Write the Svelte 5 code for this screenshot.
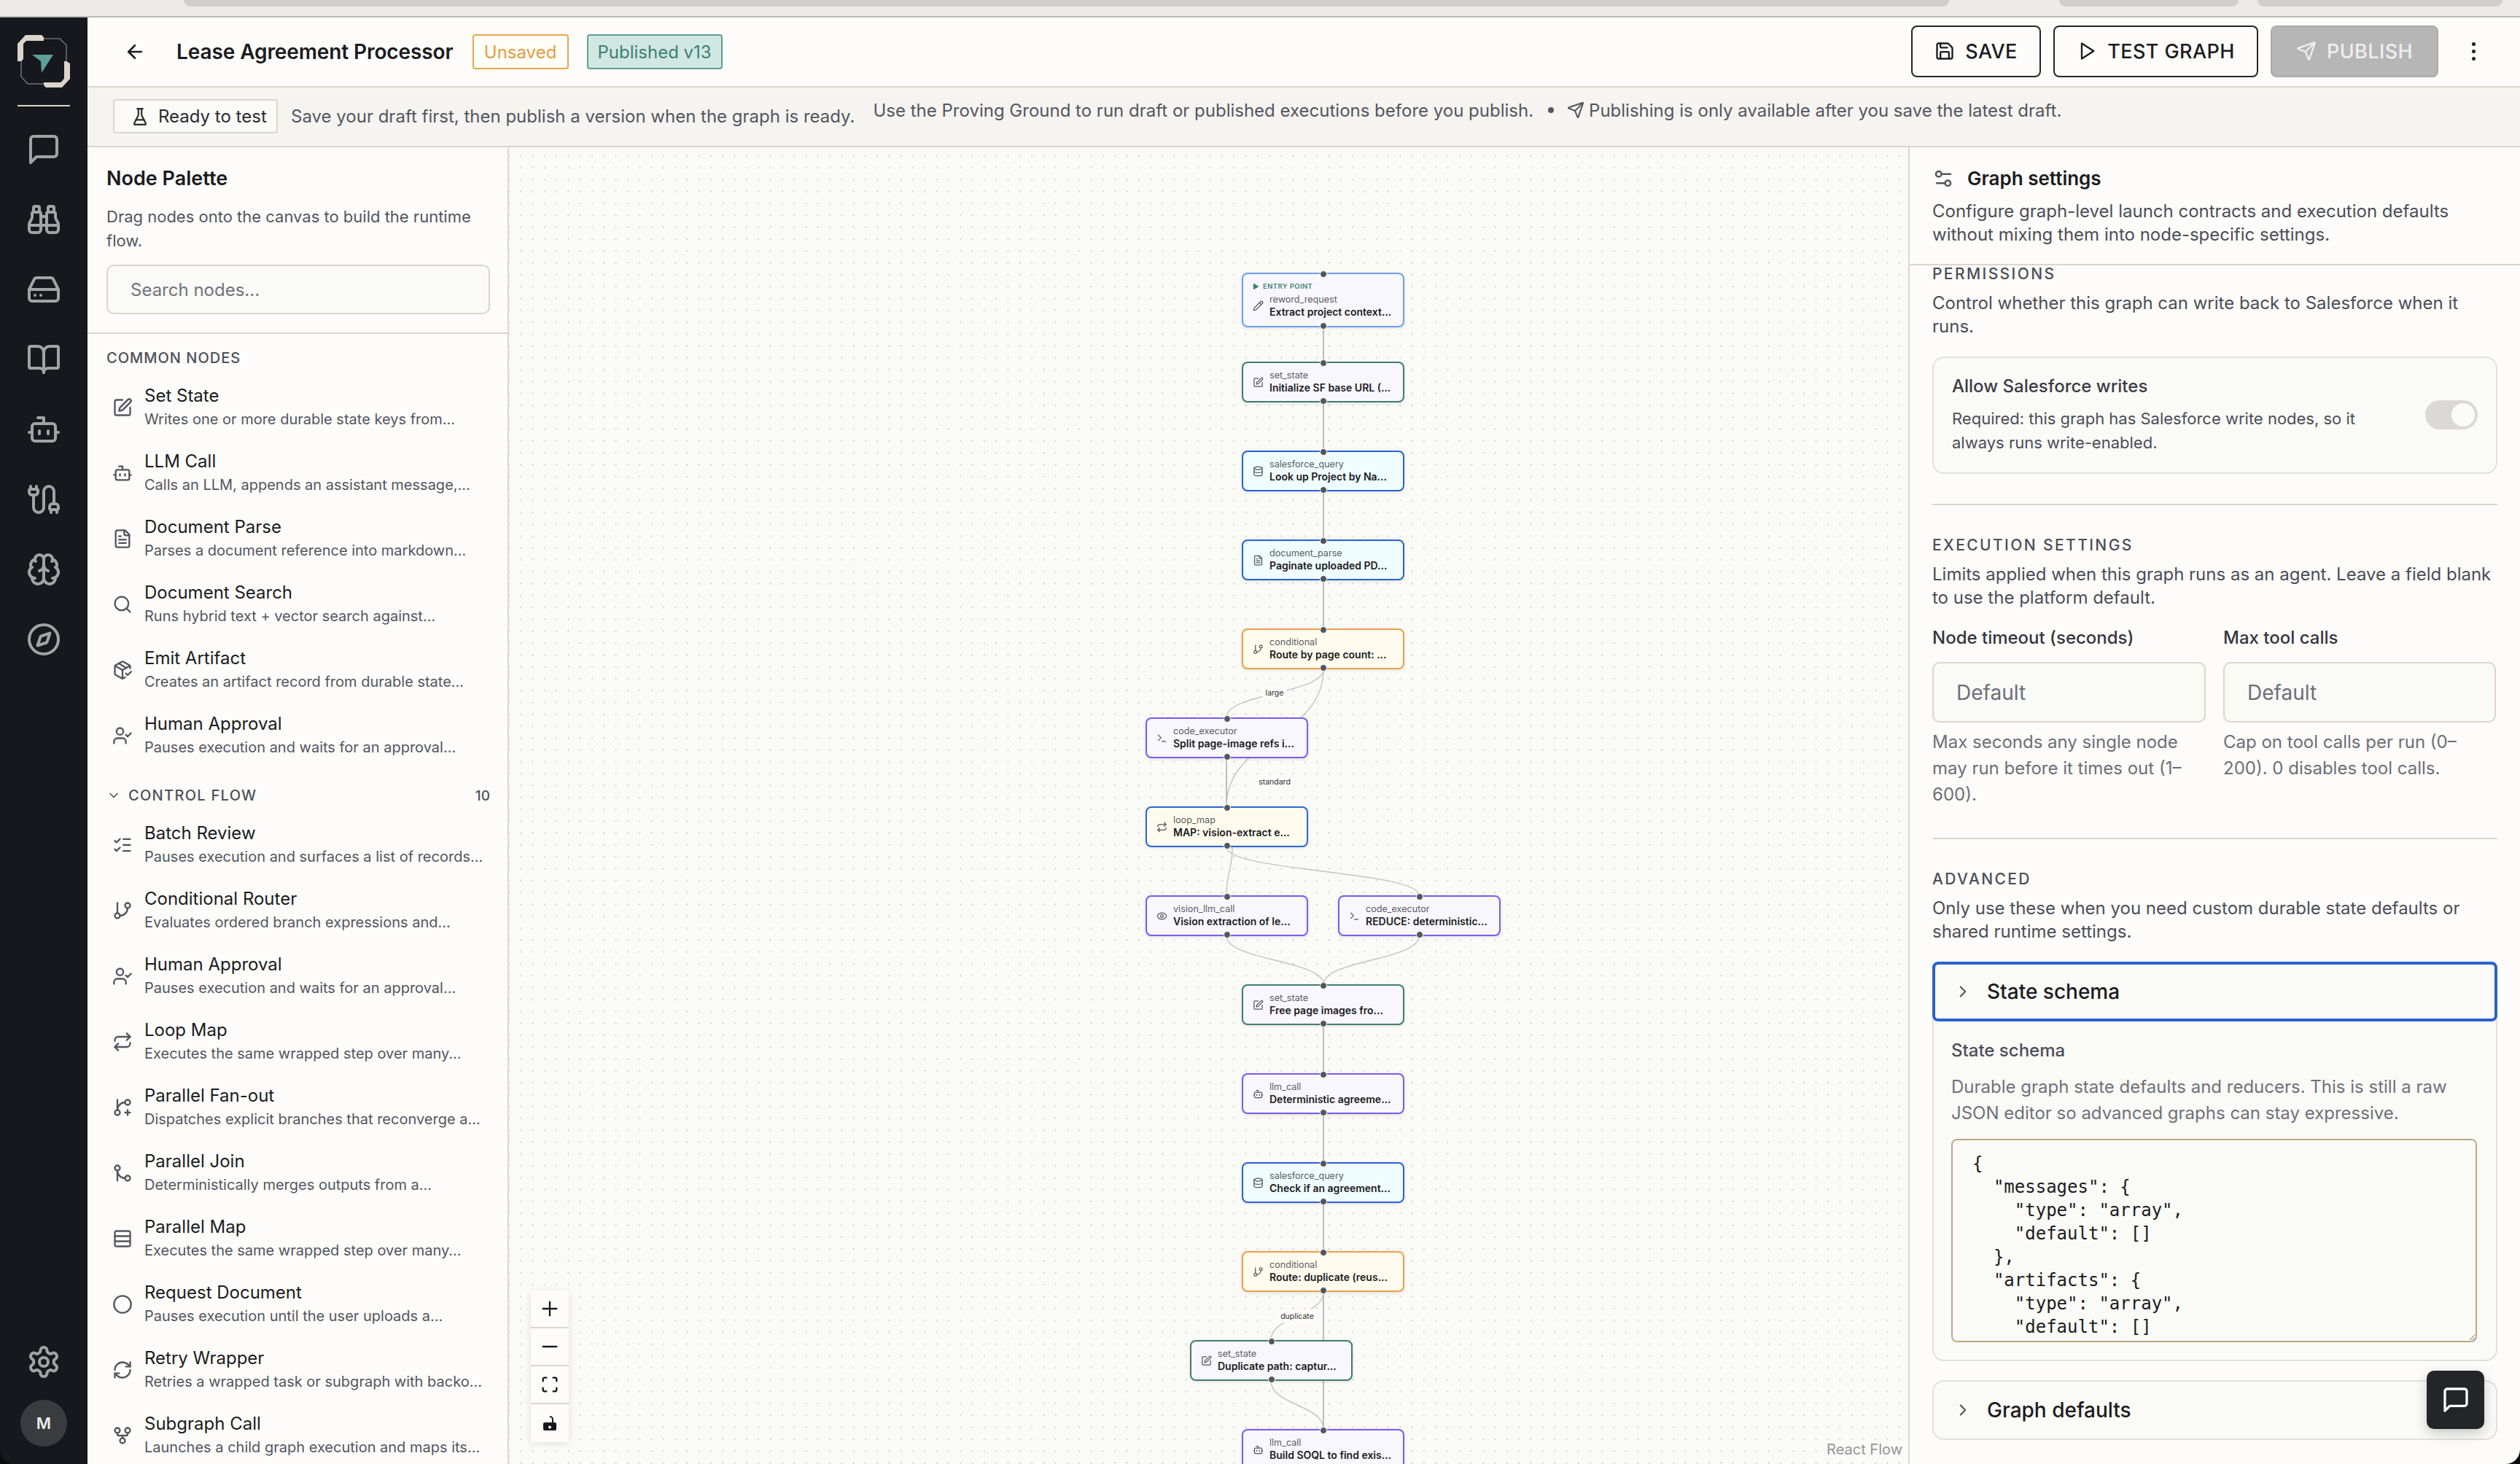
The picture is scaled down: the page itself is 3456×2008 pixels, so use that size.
<script>
  const c = (x, y, r) => `M${x - r} ${y}a${r} ${r} 0 1 0 ${2 * r} 0a${r} ${r} 0 1 0 ${-2 * r} 0`;
  const rr = (x, y, w, h, r) =>
    `M${x + r} ${y}h${w - 2 * r}a${r} ${r} 0 0 1 ${r} ${r}v${h - 2 * r}a${r} ${r} 0 0 1 ${-r} ${r}h${-(w - 2 * r)}a${r} ${r} 0 0 1 ${-r} ${-r}v${-(h - 2 * r)}a${r} ${r} 0 0 1 ${r} ${-r}z`;

  const I = {
    back: ['m12 19-7-7 7-7', 'M19 12H5'],
    flask: ['M10 2v7.527a2 2 0 0 1-.211.896L4.72 20.55a1 1 0 0 0 .9 1.45h12.76a1 1 0 0 0 .9-1.45l-5.069-10.127A2 2 0 0 1 14 9.527V2', 'M8.5 2h7', 'M7 16h10'],
    chat: ['M21 15a2 2 0 0 1-2 2H7l-4 4V5a2 2 0 0 1 2-2h14a2 2 0 0 1 2 2z'],
    binoculars: ['M10 10h4', 'M19 7V4a1 1 0 0 0-1-1h-2a1 1 0 0 0-1 1v3', 'M20 21a2 2 0 0 0 2-2v-3.851c0-1.39-2-2.962-2-4.829V8a1 1 0 0 0-1-1h-4a1 1 0 0 0-1 1v11a2 2 0 0 0 2 2z', 'M22 16H2', 'M4 21a2 2 0 0 1-2-2v-3.851c0-1.39 2-2.962 2-4.829V8a1 1 0 0 1 1-1h4a1 1 0 0 1 1 1v11a2 2 0 0 1-2 2z', 'M9 7V4a1 1 0 0 0-1-1H6a1 1 0 0 0-1 1v3'],
    drive: ['M22 12H2', 'M5.45 5.11 2 12v6a2 2 0 0 0 2 2h16a2 2 0 0 0 2-2v-6l-3.45-6.89A2 2 0 0 0 16.76 4H7.24a2 2 0 0 0-1.79 1.11z', 'M6 16h.01', 'M10 16h.01'],
    book: ['M12 7v14', 'M3 18a1 1 0 0 1-1-1V4a1 1 0 0 1 1-1h5a4 4 0 0 1 4 4 4 4 0 0 1 4-4h5a1 1 0 0 1 1 1v13a1 1 0 0 1-1 1h-6a3 3 0 0 0-3 3 3 3 0 0 0-3-3z'],
    bot: ['M12 8V4H8', rr(4, 8, 16, 12, 2), 'M2 14h2', 'M20 14h2', 'M15 13v2', 'M9 13v2'],
    cable: ['M17 21v-2a1 1 0 0 1-1-1v-1a2 2 0 0 1 2-2h2a2 2 0 0 1 2 2v1a1 1 0 0 1-1 1', 'M19 15V6.5a1 1 0 0 0-7 0v11a1 1 0 0 1-7 0V9', 'M21 21v-2h-4', 'M3 5h4V3', 'M7 5a1 1 0 0 1 1 1v1a2 2 0 0 1-2 2H4a2 2 0 0 1-2-2V6a1 1 0 0 1 1-1V3'],
    brain: ['M12 5a3 3 0 1 0-5.997.125 4 4 0 0 0-2.526 5.77 4 4 0 0 0 .556 6.588A4 4 0 1 0 12 18Z', 'M12 5a3 3 0 1 1 5.997.125 4 4 0 0 1 2.526 5.77 4 4 0 0 1-.556 6.588A4 4 0 1 1 12 18Z', 'M15 13a4.5 4.5 0 0 1-3-4 4.5 4.5 0 0 1-3 4', 'M17.599 6.5a3 3 0 0 0 .399-1.375', 'M6.003 5.125A3 3 0 0 0 6.401 6.5', 'M3.477 10.896a4 4 0 0 1 .585-.396', 'M19.938 10.5a4 4 0 0 1 .585.396', 'M6 18a4 4 0 0 1-1.967-.516', 'M19.967 17.484A4 4 0 0 1 18 18'],
    compass: [c(12, 12, 10), 'm16.24 7.76-2.12 6.36-6.36 2.12 2.12-6.36 6.36-2.12z'],
    gear: ['M12.22 2h-.44a2 2 0 0 0-2 2v.18a2 2 0 0 1-1 1.73l-.43.25a2 2 0 0 1-2 0l-.15-.08a2 2 0 0 0-2.73.73l-.22.38a2 2 0 0 0 .73 2.73l.15.1a2 2 0 0 1 1 1.72v.51a2 2 0 0 1-1 1.74l-.15.09a2 2 0 0 0-.73 2.73l.22.38a2 2 0 0 0 2.73.73l.15-.08a2 2 0 0 1 2 0l.43.25a2 2 0 0 1 1 1.73V20a2 2 0 0 0 2 2h.44a2 2 0 0 0 2-2v-.18a2 2 0 0 1 1-1.73l.43-.25a2 2 0 0 1 2 0l.15.08a2 2 0 0 0 2.73-.73l.22-.39a2 2 0 0 0-.73-2.73l-.15-.08a2 2 0 0 1-1-1.74v-.5a2 2 0 0 1 1-1.74l.15-.09a2 2 0 0 0 .73-2.73l-.22-.38a2 2 0 0 0-2.73-.73l-.15.08a2 2 0 0 1-2 0l-.43-.25a2 2 0 0 1-1-1.73V4a2 2 0 0 0-2-2z', c(12, 12, 3)],
    save: ['M15.2 3a2 2 0 0 1 1.4.6l3.8 3.8a2 2 0 0 1 .6 1.4V19a2 2 0 0 1-2 2H5a2 2 0 0 1-2-2V5a2 2 0 0 1 2-2z', 'M17 21v-7a1 1 0 0 0-1-1H8a1 1 0 0 0-1 1v7', 'M7 3v4a1 1 0 0 0 1 1h7'],
    play: ['M6 3 20 12 6 21z'],
    send: ['M14.536 21.686a.5.5 0 0 0 .937-.024l6.5-19a.496.496 0 0 0-.635-.635l-19 6.5a.5.5 0 0 0-.024.937l7.93 3.18a2 2 0 0 1 1.112 1.11z', 'm21.854 2.147-10.94 10.939'],
    sliders: ['M20 7h-9', 'M14 17H5', c(17, 17, 3), c(7, 7, 3)],
    pen: ['M12 3H5a2 2 0 0 0-2 2v14a2 2 0 0 0 2 2h14a2 2 0 0 0 2-2v-7', 'M18.375 2.625a1 1 0 0 1 3 3l-9.013 9.014a2 2 0 0 1-.853.505l-2.873.84a.5.5 0 0 1-.62-.62l.84-2.873a2 2 0 0 1 .506-.852z'],
    file: ['M15 2H6a2 2 0 0 0-2 2v16a2 2 0 0 0 2 2h12a2 2 0 0 0 2-2V7Z', 'M14 2v4a2 2 0 0 0 2 2h4', 'M10 9H8', 'M16 13H8', 'M16 17H8'],
    search: ['m21 21-4.34-4.34', c(11, 11, 8)],
    pack: ['m16 16 2 2 4-4', 'M21 10V8a2 2 0 0 0-1-1.73l-7-4a2 2 0 0 0-2 0l-7 4A2 2 0 0 0 3 8v8a2 2 0 0 0 1 1.73l7 4a2 2 0 0 0 2 0l2-1.14', 'm7.5 4.27 9 5.15', 'M3.29 7 12 12l8.71-5', 'M12 22V12'],
    user: ['m16 11 2 2 4-4', 'M16 21v-2a4 4 0 0 0-4-4H6a4 4 0 0 0-4 4v2', c(9, 7, 4)],
    list: ['M13 5h8', 'M13 12h8', 'M13 19h8', 'm3 17 2 2 4-4', 'm3 7 2 2 4-4'],
    branch: ['M6 3v12', c(18, 6, 3), c(6, 18, 3), 'M18 9a9 9 0 0 1-9 9'],
    repeat: ['m17 2 4 4-4 4', 'M3 11v-1a4 4 0 0 1 4-4h14', 'm7 22-4-4 4-4', 'M21 13v1a4 4 0 0 1-4 4H3'],
    fan: ['M6 3v12', c(18, 6, 3), c(6, 18, 3), 'M15 6a9 9 0 0 0-9 9', 'M18 15v6', 'M21 18h-6'],
    merge: [c(18, 18, 3), c(6, 6, 3), 'M6 21V9a9 9 0 0 0 9 9'],
    rows: [rr(3, 3, 18, 18, 2), 'M3 9h18', 'M3 15h18'],
    circle: [c(12, 12, 10)],
    refresh: ['M3 12a9 9 0 0 1 9-9 9.75 9.75 0 0 1 6.74 2.74L21 8', 'M21 3v5h-5', 'M21 12a9 9 0 0 1-9 9 9.75 9.75 0 0 1-6.74-2.74L3 16', 'M8 16H3v5'],
    fork: [c(12, 18, 3), c(6, 6, 3), c(18, 6, 3), 'M18 9v2c0 .6-.4 1-1 1H7c-.6 0-1-.4-1-1V9', 'M12 12v3'],
    term: ['M12 19h8', 'm4 17 6-6-6-6'],
    eye: ['M2.062 12.348a1 1 0 0 1 0-.696 10.75 10.75 0 0 1 19.876 0 1 1 0 0 1 0 .696 10.75 10.75 0 0 1-19.876 0', c(12, 12, 3)],
    pencil: ['M21.174 6.812a1 1 0 0 0-3.986-3.987L3.842 16.174a2 2 0 0 0-.5.83l-1.321 4.352a.5.5 0 0 0 .623.622l4.353-1.32a2 2 0 0 0 .83-.497z', 'm15 5 4 4'],
    db: ['M3 5a9 3 0 1 0 18 0a9 3 0 1 0-18 0', 'M3 5V19A9 3 0 0 0 21 19V5', 'M3 12A9 3 0 0 0 21 12'],
    right: ['m9 18 6-6-6-6'],
    down: ['m6 9 6 6 6-6'],
    plus: ['M4 12h16', 'M12 4v16'],
    minus: ['M4 12h16'],
    fit: ['M8 4H6a2 2 0 0 0-2 2v2', 'M16 4h2a2 2 0 0 1 2 2v2', 'M8 20H6a2 2 0 0 1-2-2v-2', 'M16 20h2a2 2 0 0 0 2-2v-2']
  };

  const railTop = ['chat', 'binoculars', 'drive', 'book', 'bot', 'cable', 'brain', 'compass'];

  const common = [
    ['pen', 'Set State', 'Writes one or more durable state keys from...'],
    ['bot', 'LLM Call', 'Calls an LLM, appends an assistant message,...'],
    ['file', 'Document Parse', 'Parses a document reference into markdown...'],
    ['search', 'Document Search', 'Runs hybrid text + vector search against...'],
    ['pack', 'Emit Artifact', 'Creates an artifact record from durable state...'],
    ['user', 'Human Approval', 'Pauses execution and waits for an approval...']
  ];
  const control = [
    ['list', 'Batch Review', 'Pauses execution and surfaces a list of records...'],
    ['branch', 'Conditional Router', 'Evaluates ordered branch expressions and...'],
    ['user', 'Human Approval', 'Pauses execution and waits for an approval...'],
    ['repeat', 'Loop Map', 'Executes the same wrapped step over many...'],
    ['fan', 'Parallel Fan-out', 'Dispatches explicit branches that reconverge a...'],
    ['merge', 'Parallel Join', 'Deterministically merges outputs from a...'],
    ['rows', 'Parallel Map', 'Executes the same wrapped step over many...'],
    ['circle', 'Request Document', 'Pauses execution until the user uploads a...'],
    ['refresh', 'Retry Wrapper', 'Retries a wrapped task or subgraph with backo...'],
    ['fork', 'Subgraph Call', 'Launches a child graph execution and maps its...']
  ];

  // canvas origin in page pixels is 698,202
  const nodes = [
    { x: 1005, y: 172, k: 'entry', i: 'pencil', t: 'reword_request', n: 'Extract project context...', entry: true },
    { x: 1005, y: 294, k: 'state', i: 'pen', t: 'set_state', n: 'Initialize SF base URL (...' },
    { x: 1005, y: 416, k: 'sf', i: 'db', t: 'salesforce_query', n: 'Look up Project by Na...' },
    { x: 1005, y: 538, k: 'sf', i: 'file', t: 'document_parse', n: 'Paginate uploaded PD...' },
    { x: 1005, y: 660, k: 'cond', i: 'branch', t: 'conditional', n: 'Route by page count: ...' },
    { x: 873, y: 782, k: 'llm', i: 'term', t: 'code_executor', n: 'Split page-image refs i...' },
    { x: 873, y: 904, k: 'loop', i: 'repeat', t: 'loop_map', n: 'MAP: vision-extract e...' },
    { x: 873, y: 1026, k: 'llm', i: 'eye', t: 'vision_llm_call', n: 'Vision extraction of le...' },
    { x: 1137, y: 1026, k: 'llm', i: 'term', t: 'code_executor', n: 'REDUCE: deterministic...' },
    { x: 1005, y: 1148, k: 'state', i: 'pen', t: 'set_state', n: 'Free page images fro...' },
    { x: 1005, y: 1270, k: 'llm', i: 'bot', t: 'llm_call', n: 'Deterministic agreeme...' },
    { x: 1005, y: 1392, k: 'sf', i: 'db', t: 'salesforce_query', n: 'Check if an agreement...' },
    { x: 1005, y: 1514, k: 'cond', i: 'branch', t: 'conditional', n: 'Route: duplicate (reus...' },
    { x: 934, y: 1636, k: 'state', i: 'pen', t: 'set_state', n: 'Duplicate path: captur...' },
    { x: 1005, y: 1758, k: 'llm', i: 'bot', t: 'llm_call', n: 'Build SOQL to find exis...' }
  ];

  const bez = (x1, y1, x2, y2) => {
    const m = (y2 - y1) / 2;
    return `M${x1} ${y1}C${x1} ${y1 + m} ${x2} ${y2 - m} ${x2} ${y2}`;
  };
  const straight = [
    [1117, 247, 1117, 294], [1117, 349, 1117, 416], [1117, 472, 1117, 538], [1117, 594, 1117, 660],
    [984, 838, 984, 904], [1117, 1204, 1117, 1270], [1117, 1326, 1117, 1392], [1117, 1448, 1117, 1514],
    [1117, 1570, 1117, 1758]
  ];
  const curves = [
    [1117, 716, 984, 782], [1117, 716, 984, 904], [984, 960, 1248, 1026], [992, 960, 984, 1026],
    [984, 1082, 1117, 1148], [1248, 1082, 1117, 1148], [1117, 1570, 1045, 1636], [1045, 1692, 1117, 1758]
  ];
  const labels = [
    { x: 1050, y: 748, s: 'large' },
    { x: 1050, y: 870, s: 'standard' },
    { x: 1081, y: 1603, s: 'duplicate' }
  ];

  const schema = `{
  "messages": {
    "type": "array",
    "default": []
  },
  "artifacts": {
    "type": "array",
    "default": []
  }
}`;
</script>

{#snippet icon(name, cls)}
  <svg class="ic {cls}" viewBox="0 0 24 24" aria-hidden="true">
    {#each I[name] as d}<path {d} />{/each}
  </svg>
{/snippet}

{#snippet paletteItem(item)}
  <div class="pal-item">
    {@render icon(item[0], 'pal-ic')}
    <div class="pal-text">
      <div class="pal-name">{item[1]}</div>
      <div class="pal-desc">{item[2]}</div>
    </div>
  </div>
{/snippet}

<div class="window">
  <div class="chrome">
    <span class="tab tab-a"></span>
    <span class="tab tab-b"></span>
    <span class="tab tab-c"></span>
  </div>

  <div class="shell">
    <nav class="rail">
      <div class="logo">
        <svg width="120" height="120" viewBox="0 24 120 120">
          <path d="M60 53H82L91 62V105L82 115H38L29 105V60L38 53" fill="none" stroke="#6c6d70" stroke-width="1.6" />
          <path d="M24 60 35 48H57L60 51V56H36L32 60V81L29 84H24Z" fill="#dcd5c9" />
          <path d="M96 108 85 120H63L60 117V113H84L88 108V84L91 84L96 87Z" fill="#dcd5c9" />
          <path d="M44 75H73L57 100 56 84Z" fill="#5d9f96" />
        </svg>
      </div>
      <div class="rail-line"></div>
      <div class="rail-icons">
        {#each railTop as name}
          <div class="rail-btn">{@render icon(name, 'rail-ic')}</div>
        {/each}
      </div>
      <div class="rail-bottom">
        <div class="rail-btn">{@render icon('gear', 'rail-ic')}</div>
        <div class="avatar">M</div>
      </div>
    </nav>

    <div class="main">
      <header class="topbar">
        {@render icon('back', 'back-ic')}
        <h1>Lease Agreement Processor</h1>
        <span class="badge unsaved">Unsaved</span>
        <span class="badge published">Published v13</span>
        <div class="actions">
          <button class="btn save">{@render icon('save', 'btn-ic')}SAVE</button>
          <button class="btn test">{@render icon('play', 'btn-ic')}TEST GRAPH</button>
          <button class="btn publish">{@render icon('send', 'btn-ic')}PUBLISH</button>
          <div class="kebab"><i></i><i></i><i></i></div>
        </div>
      </header>

      <div class="subbar">
        <div class="sub-left">
          <span class="chip">{@render icon('flask', 'chip-ic')}Ready to test</span>
          <span>Save your draft first, then publish a version when the graph is ready.</span>
        </div>
        <div class="sub-right">
          <span>Use the Proving Ground to run draft or published executions before you publish.</span>
          <b class="dot"></b>
          {@render icon('send', 'sub-ic')}
          <span>Publishing is only available after you save the latest draft.</span>
        </div>
      </div>

      <div class="workspace">
        <aside class="palette">
          <div class="pal-head">
            <h2>Node Palette</h2>
            <p>Drag nodes onto the canvas to build the runtime flow.</p>
            <div class="search">Search nodes...</div>
          </div>
          <div class="pal-list">
            <div class="pal-label">COMMON NODES</div>
            {#each common as item}{@render paletteItem(item)}{/each}
            <div class="pal-label group">
              {@render icon('down', 'group-ic')}
              <span>CONTROL FLOW</span>
              <em>10</em>
            </div>
            {#each control as item}{@render paletteItem(item)}{/each}
          </div>
        </aside>

        <section class="canvas">
          <svg class="edges" width="1919" height="1806" fill="none">
            {#each straight as e}
              <path class="edge-s" d="M{e[0]} {e[1]}L{e[2]} {e[3]}" />
            {/each}
            {#each curves as e}
              <path class="edge-c" d={bez(e[0], e[1], e[2], e[3])} />
            {/each}
          </svg>

          {#each labels as l}
            <span class="edge-label" style="left:{l.x}px;top:{l.y}px">{l.s}</span>
          {/each}

          {#each nodes as n}
            <div class="node {n.k}" style="left:{n.x}px;top:{n.y}px">
              <span class="handle top"></span>
              {#if n.entry}
                <div class="entry-tag"><svg viewBox="0 0 10 10"><path d="M1 0 9.5 5 1 10z" /></svg>ENTRY POINT</div>
              {/if}
              <div class="node-row">
                {@render icon(n.i, 'node-ic')}
                <div class="node-text">
                  <div class="node-type">{n.t}</div>
                  <div class="node-name">{n.n}</div>
                </div>
              </div>
              <span class="handle bottom"></span>
            </div>
          {/each}

          <div class="controls">
            <div class="ctl">{@render icon('plus', 'ctl-ic')}</div>
            <div class="ctl">{@render icon('minus', 'ctl-ic')}</div>
            <div class="ctl">{@render icon('fit', 'ctl-ic')}</div>
            <div class="ctl">
              <svg class="lock" viewBox="0 0 24 24">
                <path d="M12 2a5 5 0 0 1 5 5v4h-2V7a3 3 0 0 0-3-3z" />
                <path fill-rule="evenodd" d="M5 11h14a2 2 0 0 1 2 2v7a2 2 0 0 1-2 2H5a2 2 0 0 1-2-2v-7a2 2 0 0 1 2-2zm7 4.5a2 2 0 1 0 0 4 2 2 0 0 0 0-4z" />
              </svg>
            </div>
          </div>

          <div class="attribution">React Flow</div>
        </section>

        <aside class="settings">
          <div class="set-head">
            <h2>{@render icon('sliders', 'set-ic')}Graph settings</h2>
            <p>Configure graph-level launch contracts and execution defaults without mixing them into node-specific settings.</p>
          </div>

          <div class="set-body">
            <div class="sec-title">PERMISSIONS</div>
            <p class="sec-desc">Control whether this graph can write back to Salesforce when it runs.</p>
            <div class="perm-card">
              <div>
                <div class="perm-title">Allow Salesforce writes</div>
                <p>Required: this graph has Salesforce write nodes, so it always runs write-enabled.</p>
              </div>
              <div class="toggle"><span></span></div>
            </div>

            <hr />

            <div class="sec-title">EXECUTION SETTINGS</div>
            <p class="sec-desc">Limits applied when this graph runs as an agent. Leave a field blank to use the platform default.</p>
            <div class="fields">
              <div>
                <label for="timeout">Node timeout (seconds)</label>
                <input id="timeout" placeholder="Default" />
                <p>Max seconds any single node may run before it times out (1–600).</p>
              </div>
              <div>
                <label for="calls">Max tool calls</label>
                <input id="calls" placeholder="Default" />
                <p>Cap on tool calls per run (0–200). 0 disables tool calls.</p>
              </div>
            </div>

            <hr />

            <div class="sec-title">ADVANCED</div>
            <p class="sec-desc">Only use these when you need custom durable state defaults or shared runtime settings.</p>

            <div class="acc">
              <div class="acc-head focused">{@render icon('right', 'acc-ic')}State schema</div>
              <div class="acc-body">
                <div class="acc-label">State schema</div>
                <p>Durable graph state defaults and reducers. This is still a raw JSON editor so advanced graphs can stay expressive.</p>
                <textarea readonly spellcheck="false" value={schema}></textarea>
              </div>
            </div>

            <div class="acc second">
              <div class="acc-head">{@render icon('right', 'acc-ic')}Graph defaults</div>
            </div>
          </div>

          <div class="fab">{@render icon('chat', 'fab-ic')}</div>
        </aside>
      </div>
    </div>
  </div>
</div>

<style>
  :global(body) {
    margin: 0;
    background: #0b0b0c;
    font-family: Inter, "Liberation Sans", sans-serif;
    color: #1b1b20;
  }

  * {
    box-sizing: border-box;
  }

  h1, h2, p {
    margin: 0;
  }

  .window {
    width: 3456px;
    height: 2008px;
    display: flex;
    flex-direction: column;
    overflow: hidden;
  }

  .chrome {
    height: 24px;
    flex: none;
    display: flex;
    background: #ecebe8;
    border-bottom: 2px solid #b9b8b4;
  }

  .tab {
    height: 9px;
    background: #cfcecb;
    border-radius: 0 0 14px 14px;
  }
  .tab-a { margin-left: 252px; width: 2421px; }
  .tab-b { margin-left: 151px; width: 246px; }
  .tab-c { margin-left: 26px; width: 336px; }

  .shell {
    flex: 1;
    min-height: 0;
    display: flex;
    border-radius: 0 0 20px 20px;
    overflow: hidden;
  }

  .ic {
    display: block;
    flex: none;
    fill: none;
    stroke: currentColor;
    stroke-width: 2;
    stroke-linecap: round;
    stroke-linejoin: round;
  }

  /* left rail */
  .rail {
    width: 120px;
    flex: none;
    background: #16181d;
    display: flex;
    flex-direction: column;
    align-items: center;
  }

  .logo {
    height: 120px;
    width: 120px;
    flex: none;
    overflow: hidden;
  }

  .rail-line {
    width: 72px;
    height: 2px;
    background: #dcd5c9;
    flex: none;
  }

  .rail-icons {
    margin-top: 11px;
    display: flex;
    flex-direction: column;
  }

  .rail-btn {
    width: 64px;
    height: 96px;
    display: flex;
    align-items: center;
    justify-content: center;
    color: #a3a3a3;
  }

  :global(.rail-ic) {
    width: 48px;
    height: 48px;
    stroke-width: 1.5;
  }

  .rail-bottom {
    margin-top: auto;
    padding-bottom: 24px;
    display: flex;
    flex-direction: column;
    align-items: center;
  }

  .avatar {
    width: 64px;
    height: 64px;
    margin-top: 4px;
    border-radius: 50%;
    background: #3a3b3f;
    color: #ecebe8;
    display: flex;
    align-items: center;
    justify-content: center;
    font-size: 22px;
    font-weight: 600;
  }

  .main {
    flex: 1;
    min-width: 0;
    display: flex;
    flex-direction: column;
    background: #fdfcfa;
  }

  /* top bar */
  .topbar {
    height: 96px;
    flex: none;
    display: flex;
    align-items: center;
    padding-left: 50px;
    border-bottom: 2px solid #ddd5c9;
  }

  :global(.back-ic) {
    width: 30px;
    height: 30px;
    color: #1b1b20;
  }

  h1 {
    margin-left: 42px;
    font-size: 28px;
    font-weight: 600;
    letter-spacing: -0.1px;
    white-space: nowrap;
  }

  .badge {
    height: 48px;
    display: flex;
    align-items: center;
    justify-content: center;
    border: 2px solid;
    border-radius: 4px;
    font-size: 24px;
    white-space: nowrap;
  }

  .unsaved {
    margin-left: 26px;
    width: 132px;
    color: #e39c40;
    border-color: #e9a54c;
    background: #fffdf8;
  }

  .published {
    margin-left: 25px;
    width: 186px;
    color: #3f7f74;
    border-color: #5f9e95;
    background: #d0e7e2;
  }

  .actions {
    margin-left: auto;
    display: flex;
    align-items: center;
    gap: 17px;
    padding-right: 61px;
    margin-top: -2px;
  }

  .btn {
    height: 71px;
    display: flex;
    align-items: center;
    justify-content: center;
    gap: 14px;
    background: #fdfcfa;
    border: 2px solid #24252a;
    border-radius: 8px;
    color: #1b1b20;
    font-family: inherit;
    font-size: 27px;
    font-weight: 500;
    letter-spacing: 0.4px;
  }

  :global(.btn-ic) {
    width: 28px;
    height: 28px;
    stroke-width: 1.7;
  }

  .save { width: 178px; }
  .test { width: 281px; }

  .publish {
    width: 230px;
    background: #b6b6b6;
    border-color: #a9a9a9;
    color: #efefef;
  }

  .kebab {
    margin-left: 29px;
    display: flex;
    flex-direction: column;
    gap: 5px;
  }

  .kebab i {
    width: 5px;
    height: 5px;
    border-radius: 50%;
    background: #1b1b20;
  }

  /* hint bar */
  .subbar {
    height: 82px;
    flex: none;
    display: flex;
    align-items: flex-start;
    gap: 25px;
    padding: 16px 0 0 35px;
    background: #f5f4f1;
    border-bottom: 2px solid #ddd5c9;
    color: #54555f;
    font-size: 24px;
  }

  .sub-left {
    display: flex;
    align-items: center;
    gap: 18px;
  }

  .chip {
    width: 226px;
    height: 47px;
    display: flex;
    align-items: center;
    gap: 12px;
    padding-left: 22px;
    background: #fafaf7;
    border: 2px solid #ddd5c9;
    border-radius: 4px;
    color: #2a2b31;
  }

  :global(.chip-ic) {
    width: 26px;
    height: 26px;
    stroke-width: 1.7;
  }

  .sub-right {
    display: flex;
    align-items: center;
    height: 30px;
  }

  .dot {
    width: 8px;
    height: 8px;
    margin: 0 18px 0 20px;
    border-radius: 50%;
    background: #54555f;
  }

  :global(.sub-ic) {
    width: 24px;
    height: 24px;
    margin-right: 6px;
    stroke-width: 1.7;
  }

  .workspace {
    flex: 1;
    min-height: 0;
    display: flex;
  }

  /* palette */
  .palette {
    width: 578px;
    flex: none;
    border-right: 2px solid #ddd5c9;
    overflow: hidden;
  }

  .pal-head {
    padding: 27px 24px 25px 26px;
    border-bottom: 2px solid #ddd5c9;
  }

  .pal-head h2 {
    font-size: 27px;
    font-weight: 600;
    line-height: 32px;
  }

  .pal-head p {
    margin-top: 20px;
    font-size: 22px;
    line-height: 33px;
    color: #54555f;
  }

  .search {
    margin-top: 16px;
    height: 68px;
    display: flex;
    align-items: center;
    padding-left: 31px;
    background: #fafaf7;
    border: 2px solid #ddd5c9;
    border-radius: 10px;
    font-size: 24px;
    color: #72737c;
  }

  .pal-list {
    padding: 19px 24px 0 26px;
  }

  .pal-label {
    height: 28px;
    margin-bottom: 9px;
    display: flex;
    align-items: center;
    font-size: 20px;
    font-weight: 500;
    letter-spacing: 1px;
    color: #4f5059;
  }

  .pal-label.group {
    margin-top: 23px;
    letter-spacing: 1.3px;
  }

  .pal-label em {
    margin-left: auto;
    font-style: normal;
    font-size: 19px;
    letter-spacing: 0;
  }

  :global(.group-ic) {
    width: 20px;
    height: 20px;
    margin-right: 10px;
  }

  .pal-item {
    height: 90px;
    display: flex;
    align-items: center;
    gap: 16px;
    color: #54555f;
  }

  :global(.pal-ic) {
    width: 28px;
    height: 28px;
    margin-left: 8px;
    stroke-width: 1.7;
  }

  .pal-name {
    font-size: 24px;
    line-height: 32px;
    color: #1b1b20;
  }

  .pal-desc {
    font-size: 20px;
    line-height: 32px;
    white-space: nowrap;
  }

  /* canvas */
  .canvas {
    position: relative;
    flex: 1;
    min-width: 0;
    overflow: hidden;
    background-color: #fafaf7;
    background-image: radial-gradient(circle, #c6c6c1 0.8px, transparent 1.2px);
    background-size: 16.3px 16.3px;
    background-position: -8.15px 3.65px;
  }

  .edges {
    position: absolute;
    inset: 0;
  }

  .edge-s {
    stroke: #bcbcb8;
    stroke-width: 2;
  }

  .edge-c {
    stroke: #c4c4c0;
    stroke-width: 1.4;
  }

  .edge-label {
    position: absolute;
    transform: translate(-50%, -50%);
    padding: 3px 4px;
    background: #fdfcfa;
    font-size: 10.5px;
    color: #2a2b31;
  }

  .node {
    position: absolute;
    width: 223px;
    height: 56px;
    padding: 0 8px 0 13px;
    display: flex;
    flex-direction: column;
    justify-content: center;
    border: 2px solid;
    border-radius: 8px;
    box-shadow: 0 1px 4px rgba(0, 0, 0, 0.12);
  }

  .entry { border-color: #6f9fee; background: #f8f7fe; height: 75px; }
  .state { border-color: #3e7e71; background: #f8f7fe; }
  .sf { border-color: #2b61d6; background: #effdff; }
  .cond { border-color: #e9a248; background: #fffcef; }
  .llm { border-color: #7a5cf0; background: #f8f7fe; }
  .loop { border-color: #2b67d0; background: #fffcef; }

  .handle {
    position: absolute;
    left: 50%;
    width: 10px;
    height: 10px;
    margin-left: -5px;
    border-radius: 50%;
    background: #55565c;
    border: 1px solid #fafaf7;
  }
  .handle.top { top: -5px; }
  .handle.bottom { bottom: -5px; }

  .entry-tag {
    display: flex;
    align-items: center;
    gap: 5px;
    font-size: 9.5px;
    font-weight: 600;
    letter-spacing: 0.4px;
    color: #3e7e71;
    line-height: 12px;
    margin-bottom: 4px;
  }

  .entry-tag svg {
    width: 9px;
    height: 10px;
    fill: #3e7e71;
  }

  .node-row {
    display: flex;
    align-items: center;
    gap: 8px;
    color: #54555f;
  }

  :global(.node-ic) {
    width: 15px;
    height: 15px;
    stroke-width: 1.7;
  }

  .node-text {
    min-width: 0;
  }

  .node-type {
    font-size: 12.6px;
    line-height: 16px;
    color: #5a5b63;
  }

  .node-name {
    font-size: 14px;
    font-weight: 600;
    line-height: 18px;
    color: #1b1b20;
    white-space: nowrap;
  }

  .controls {
    position: absolute;
    left: 30px;
    bottom: 30px;
    width: 52px;
    box-shadow: 0 2px 10px rgba(0, 0, 0, 0.1);
  }

  .ctl {
    height: 52px;
    display: flex;
    align-items: center;
    justify-content: center;
    background: #fdfcfa;
    border-bottom: 2px solid #ddd5c9;
    color: #16181d;
  }

  .ctl:last-child {
    border-bottom: 0;
  }

  :global(.ctl-ic) {
    width: 28px;
    height: 28px;
    stroke-linecap: butt;
  }

  .lock {
    width: 24px;
    height: 24px;
    fill: #16181d;
  }

  .attribution {
    position: absolute;
    right: 4px;
    bottom: 8px;
    padding: 0 4px;
    font-size: 20px;
    color: #95959a;
    background: rgba(253, 252, 250, 0.5);
  }

  /* right panel */
  .settings {
    position: relative;
    width: 839px;
    flex: none;
    border-left: 2px solid #ddd5c9;
    overflow: hidden;
  }

  .set-head {
    height: 162px;
    padding: 27px 30px 0 31px;
    border-bottom: 2px solid #ddd5c9;
  }

  .set-head h2 {
    display: flex;
    align-items: center;
    gap: 18px;
    font-size: 26px;
    font-weight: 600;
    line-height: 32px;
  }

  :global(.set-ic) {
    width: 30px;
    height: 30px;
    color: #54555f;
    stroke-width: 1.7;
  }

  .set-head p {
    margin-top: 13px;
    font-size: 24px;
    line-height: 32px;
    color: #4c4d57;
  }

  .set-body {
    padding: 0 31px;
  }

  .sec-title {
    height: 24px;
    line-height: 24px;
    font-size: 21px;
    font-weight: 500;
    letter-spacing: 2.4px;
    color: #4c4d57;
  }

  .sec-desc {
    margin-top: 12px;
    font-size: 24px;
    line-height: 32px;
    color: #4c4d57;
  }

  .perm-card {
    margin-top: 25px;
    height: 161px;
    display: flex;
    padding: 22px 25px 0 25px;
    background: #fafaf7;
    border: 2px solid #e2e0db;
    border-radius: 16px;
  }

  .perm-title {
    font-size: 24px;
    font-weight: 500;
    line-height: 34px;
    color: #3a3b44;
  }

  .perm-card p {
    margin-top: 11px;
    width: 590px;
    font-size: 22px;
    line-height: 33px;
    color: #4c4d57;
  }

  .toggle {
    margin: 36px 0 0 auto;
    width: 72px;
    height: 40px;
    flex: none;
    padding: 4px;
    display: flex;
    justify-content: flex-end;
    background: #dad9d5;
    border-radius: 20px;
  }

  .toggle span {
    width: 32px;
    height: 32px;
    border-radius: 50%;
    background: #fbfbf9;
  }

  hr {
    margin: 41px 0 43px;
    height: 2px;
    border: 0;
    background: #ddd5c9;
  }

  .fields {
    margin-top: 23px;
    display: grid;
    grid-template-columns: 375px 374px;
    gap: 24px;
  }

  .fields label {
    display: block;
    font-size: 24px;
    font-weight: 500;
    line-height: 32px;
    color: #34353e;
  }

  .fields input {
    display: block;
    width: 100%;
    height: 83px;
    margin-top: 17px;
    padding-left: 31px;
    background: #fafaf7;
    border: 2px solid #ddd5c9;
    border-radius: 10px;
    font-family: inherit;
    font-size: 28px;
  }

  .fields input::placeholder {
    color: #6d6e77;
    opacity: 1;
  }

  .fields p {
    margin-top: 9px;
    font-size: 24px;
    line-height: 36px;
    color: #6d6e77;
  }

  .acc {
    margin-top: 25px;
    background: #fafaf7;
    border: 2px solid #e2e0db;
    border-radius: 16px;
  }

  .acc.second {
    margin-top: 26px;
  }

  .acc-head {
    height: 78px;
    display: flex;
    align-items: center;
    gap: 20px;
    padding-left: 27px;
    font-size: 28px;
    font-weight: 500;
    color: #1b1b20;
  }

  .acc-head.focused {
    height: 82px;
    margin: -2px;
    padding-left: 25px;
    border: 4px solid #2b61d0;
    border-radius: 8px;
  }

  :global(.acc-ic) {
    width: 26px;
    height: 26px;
    color: #54555f;
    stroke-width: 2;
  }

  .acc-body {
    padding: 26px 24px 24px;
  }

  .acc-label {
    font-size: 24px;
    font-weight: 500;
    line-height: 32px;
    color: #4c4d57;
  }

  .acc-body p {
    margin-top: 16px;
    font-size: 24px;
    line-height: 36px;
    color: #70717a;
  }

  textarea {
    display: block;
    width: 721px;
    height: 279px;
    margin-top: 17px;
    padding: 16px 27px;
    background: #fafaf7;
    border: 2px solid #bfa684;
    border-radius: 8px;
    font-family: "DejaVu Sans Mono", "Liberation Mono", monospace;
    font-size: 24px;
    line-height: 32px;
    color: #1b1b20;
    outline: none;
    resize: vertical;
    scrollbar-width: none;
  }

  .fab {
    position: absolute;
    left: 709px;
    top: 1678px;
    width: 79px;
    height: 80px;
    display: flex;
    align-items: center;
    justify-content: center;
    background: #242528;
    border-radius: 10px;
    color: #fafaf7;
    box-shadow: 0 6px 18px rgba(0, 0, 0, 0.2);
  }

  :global(.fab-ic) {
    width: 40px;
    height: 40px;
    stroke-width: 1.6;
  }
</style>
